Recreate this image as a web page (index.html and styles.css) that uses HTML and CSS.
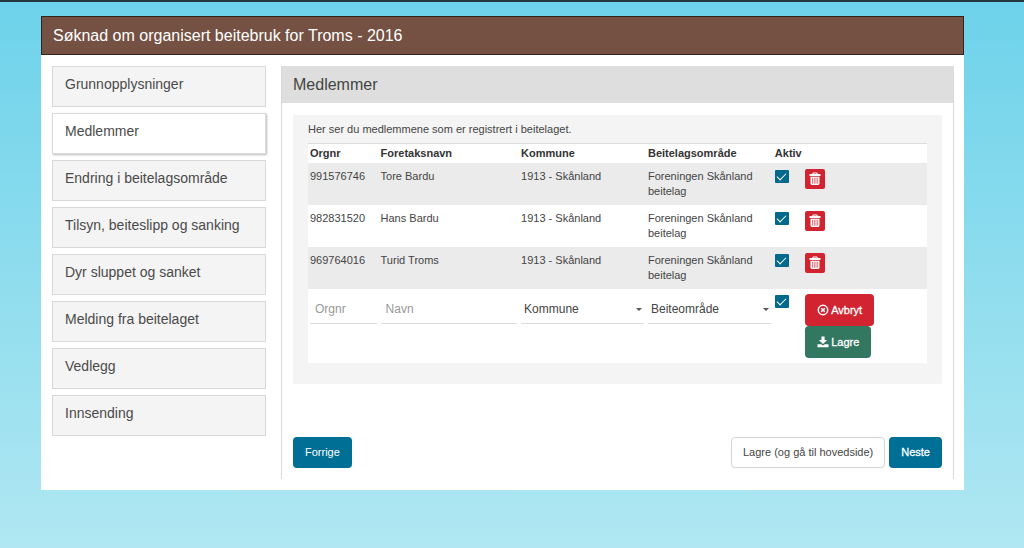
FILE: index.html
```html
<!DOCTYPE html>
<html lang="no">
<head>
<meta charset="utf-8">
<title>Søknad om organisert beitebruk</title>
<link rel="stylesheet" href="styles.css">
</head>
<body>
<svg class="symbols" aria-hidden="true">
  <symbol id="trash" viewBox="0 0 12 14">
    <path fill="currentColor" fill-rule="evenodd" d="M4 0.500h4L9 2h2.500v2H0.500V2H3zM4.600 1.500L4.300 2h3.400l-.3-.5zM1.500 4.700h9V12l-1 1h-7l-1-1zM3 5.700v6h.6v-6zM4.900 5.700v6h.6v-6zM6.700 5.700v6h.6v-6zM8.500 5.700v6h.6v-6z"/>
  </symbol>
</svg>
<div class="page">
  <header class="page-header"><h1>Søknad om organisert beitebruk for Troms - 2016</h1></header>
  <div class="page-body">
    <nav class="steps">
      <a class="step" href="#">Grunnopplysninger</a>
      <a class="step step-active" href="#" aria-current="page">Medlemmer</a>
      <a class="step" href="#">Endring i beitelagsområde</a>
      <a class="step" href="#">Tilsyn, beiteslipp og sanking</a>
      <a class="step" href="#">Dyr sluppet og sanket</a>
      <a class="step" href="#">Melding fra beitelaget</a>
      <a class="step" href="#">Vedlegg</a>
      <a class="step" href="#">Innsending</a>
    </nav>
    <main class="content">
      <h2 class="content-title">Medlemmer</h2>
      <section class="panel">
        <p class="intro">Her ser du medlemmene som er registrert i beitelaget.</p>
        <table class="members">
          <colgroup><col class="col-org"><col class="col-name"><col class="col-area"><col class="col-area"><col class="col-active"><col></colgroup>
          <thead>
            <tr><th>Orgnr</th><th>Foretaksnavn</th><th>Kommune</th><th>Beitelagsområde</th><th>Aktiv</th><th></th></tr>
          </thead>
          <tbody>
            <tr class="shaded">
              <td>991576746</td><td>Tore Bardu</td><td>1913 - Skånland</td><td>Foreningen Skånland beitelag</td>
              <td><input class="check" type="checkbox" checked aria-label="Aktiv"></td>
              <td><button class="delete" type="button" aria-label="Slett"><svg width="12" height="14"><use href="#trash"/></svg></button></td>
            </tr>
            <tr>
              <td>982831520</td><td>Hans Bardu</td><td>1913 - Skånland</td><td>Foreningen Skånland beitelag</td>
              <td><input class="check" type="checkbox" checked aria-label="Aktiv"></td>
              <td><button class="delete" type="button" aria-label="Slett"><svg width="12" height="14"><use href="#trash"/></svg></button></td>
            </tr>
            <tr class="shaded">
              <td>969764016</td><td>Turid Troms</td><td>1913 - Skånland</td><td>Foreningen Skånland beitelag</td>
              <td><input class="check" type="checkbox" checked aria-label="Aktiv"></td>
              <td><button class="delete" type="button" aria-label="Slett"><svg width="12" height="14"><use href="#trash"/></svg></button></td>
            </tr>
            <tr class="new-row">
              <td><input class="field" type="text" placeholder="Orgnr" aria-label="Orgnr"></td>
              <td><input class="field" type="text" placeholder="Navn" aria-label="Navn"></td>
              <td><div class="select"><select class="field" aria-label="Kommune"><option>Kommune</option></select></div></td>
              <td><div class="select"><select class="field" aria-label="Beiteområde"><option>Beiteområde</option></select></div></td>
              <td><input class="check" type="checkbox" checked aria-label="Aktiv"></td>
              <td>
                <div class="row-actions">
                  <button class="btn btn-danger" type="button"><svg width="12" height="12" viewBox="0 0 12 12" fill="none" stroke="currentColor"><circle cx="6" cy="6" r="4.700" stroke-width="1.500"/><path d="M4.200 4.200l3.600 3.600M7.800 4.200l-3.600 3.600" stroke-width="1.500"/></svg>Avbryt</button>
                  <button class="btn btn-save" type="button"><svg width="12" height="12" viewBox="0 0 12 12" fill="currentColor"><path d="M4.400 0.500h3.200V4h2.600L6 8 1.800 4h2.600zM0.500 8.200h3.800L6 9.500l1.700-1.300h3.800v3h-11z"/></svg>Lagre</button>
                </div>
              </td>
            </tr>
          </tbody>
        </table>
      </section>
      <footer class="actions">
        <button class="btn btn-primary" type="button">Forrige</button>
        <div class="actions-end">
          <button class="btn btn-plain" type="button">Lagre (og gå til hovedside)</button>
          <button class="btn btn-primary" type="button">Neste</button>
        </div>
      </footer>
    </main>
  </div>
</div>
</body>
</html>
```
FILE: styles.css
```css
* { box-sizing: border-box; }
html { min-height: 100%; background: linear-gradient(#6dd2ea, #b0e7f2); }
body {
  margin: 0;
  padding: 14px 60px 0 41px;
  border-top: 2px solid #22383d;
  font: 11px/15px "Liberation Sans", Arial, sans-serif;
  color: #444;
}
button, input, select { font: inherit; color: inherit; margin: 0; }
.symbols { display: none; }
.page { background: #fff; }
.page-header {
  padding: 8px 11px;
  border: 1px solid #35241c;
  background: #745142;
  color: #fff;
}
.page-header h1 { margin: 0; font-size: 16px; font-weight: 400; line-height: 21px; }
.page-body { display: flex; gap: 15px; padding: 11px 10px 11px 11px; }

.steps { display: flex; flex-direction: column; gap: 6px; flex: 0 0 214px; }
.step {
  height: 41px;
  padding: 7px 12px;
  border: 1px solid #d9d9d9;
  background: #f4f4f4;
  color: #4a4a4a;
  font-size: 14px;
  line-height: 20px;
  text-decoration: none;
}
.step-active { background: #fff; box-shadow: 1px 1px 2px #bbb; }

.content { flex: 1; min-width: 0; border: solid #d9d9d9; border-width: 0 1px; }
.content-title {
  margin: 0 0 12px;
  padding: 9px 11px 8px;
  background: #dedede;
  font-size: 16px;
  font-weight: 400;
  line-height: 20px;
}
.panel { margin: 0 11px; padding: 7px 15px 21px; border-radius: 2px; background: #f4f4f4; }
.intro { margin: 0 0 6px; }

.members { width: 100%; table-layout: fixed; border-collapse: collapse; border-top: 1px solid #ddd; background: #fff; }
.col-org { width: 11.4%; }
.col-name { width: 22.7%; }
.col-area { width: 20.5%; }
.col-active { width: 4.9%; }
.members th { padding: 2px; text-align: left; color: #333; white-space: nowrap; }
.members td { padding: 6px 2px; vertical-align: top; }
.members .shaded { background: #ebebeb; }
.members .new-row td { padding: 5px 2px; }

.check {
  display: grid;
  place-content: center;
  width: 14px;
  height: 13px;
  margin-top: 1px;
  appearance: none;
  border-radius: 1px;
  background: #00698c;
}
.check:checked::before {
  content: "";
  width: 8px;
  height: 4px;
  margin-bottom: 3px;
  border: solid #fff;
  border-width: 0 0 1px 1px;
  transform: rotate(-45deg);
}
.delete {
  display: grid;
  place-content: center;
  width: 20px;
  height: 20px;
  padding: 0;
  border: 0;
  border-radius: 2px;
  background: #d12430;
  color: #fff;
}
.field {
  display: block;
  width: 100%;
  height: 30px;
  padding: 0 5px;
  border: 0;
  border-bottom: 1px solid #ddd;
  border-radius: 0;
  background: transparent;
  font-size: 12px;
}
.field::placeholder { color: #999; opacity: 1; }
.select { position: relative; }
.select .field { padding: 2px 3px 0; appearance: none; }
.select::after {
  content: "";
  position: absolute;
  top: 14px;
  right: 2px;
  border: 3px solid transparent;
  border-top-color: #555;
  border-bottom: 0;
}
.row-actions { display: flex; flex-direction: column; align-items: flex-start; }

.btn {
  display: inline-flex;
  align-items: center;
  gap: 2px;
  height: 31px;
  padding: 0 11px;
  border: 1px solid transparent;
  border-radius: 4px;
  color: #fff;
  white-space: nowrap;
}
.btn-primary { background: #006f96; }
.btn-danger { background: #d12430; }
.btn-save { background: #32775f; }
.btn-plain { border-color: #d5d5d5; background: #fff; color: #444; }
.btn-danger, .btn-save, .actions-end .btn-primary { -webkit-text-stroke: 0.3px; }
.row-actions .btn { height: 32px; }
.actions { display: flex; justify-content: space-between; padding: 53px 11px 11px; }
.actions-end { display: flex; gap: 4px; }
```
